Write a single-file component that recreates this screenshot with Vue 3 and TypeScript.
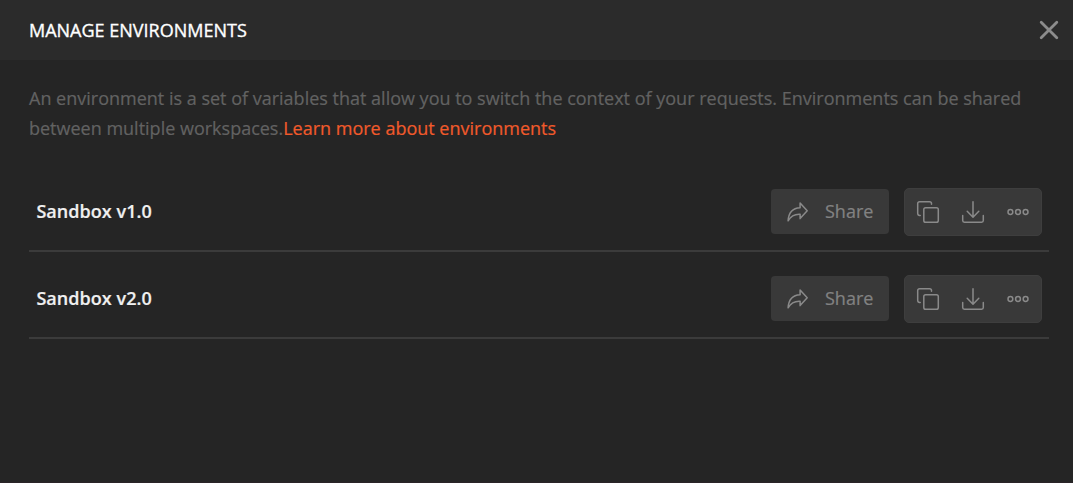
<script setup lang="ts">
interface Environment {
  id: number
  name: string
}

const environments: Environment[] = [
  { id: 1, name: 'Sandbox v1.0' },
  { id: 2, name: 'Sandbox v2.0' },
]
</script>

<template>
  <section class="modal">
    <header class="modal-header">
      <h1 class="title">MANAGE ENVIRONMENTS</h1>
      <button class="close" aria-label="Close">
        <svg width="20" height="20" viewBox="0 0 20 20">
          <path d="M2.2 2.2 17.8 17.8M17.8 2.2 2.2 17.8" />
        </svg>
      </button>
    </header>
    <main class="modal-body">
      <p class="intro">
        An environment is a set of variables that allow you to switch the context of your requests. Environments can be shared<br />between multiple workspaces.<a class="link">Learn more about environments</a>
      </p>
      <ul class="list">
        <li v-for="env in environments" :key="env.id" class="row">
          <span class="name">{{ env.name }}</span>
          <button class="share">
            <svg class="icon" width="24" height="24" viewBox="0 0 24 24">
              <path d="M14.1 3 21.2 10.8 14.1 18.6V14.2C8.5 13.9 4.7 16.2 2.1 20.8 2.6 13.1 6.6 8 14.1 7.7Z" />
            </svg>
            <span class="share-label">Share</span>
          </button>
          <div class="actions">
            <button class="action" aria-label="Duplicate">
              <svg class="icon" width="24" height="24" viewBox="0 0 24 24">
                <path d="M4.2 15.5H3.6Q1.7 15.5 1.7 13.6V3.6Q1.7 1.7 3.6 1.7H13.6Q15.5 1.7 15.5 3.6V4.2" />
                <rect x="7.8" y="7.8" width="14.5" height="14.5" rx="1.8" />
              </svg>
            </button>
            <button class="action" aria-label="Download">
              <svg class="icon" width="24" height="24" viewBox="0 0 24 24">
                <path d="M12 1.8V17M6.2 11.3 12 17.2 17.8 11.3M1.7 15.6V20.6Q1.7 22.3 3.4 22.3H20.6Q22.3 22.3 22.3 20.6V15.6" />
              </svg>
            </button>
            <button class="action" aria-label="More actions">
              <svg class="icon" width="24" height="24" viewBox="0 0 24 24">
                <circle cx="4.4" cy="12" r="2.4" />
                <circle cx="12" cy="12" r="2.4" />
                <circle cx="19.6" cy="12" r="2.4" />
              </svg>
            </button>
          </div>
        </li>
      </ul>
    </main>
  </section>
</template>

<style>
body {
  margin: 0;
  background: #252525;
}
</style>

<style scoped>
.modal {
  box-sizing: border-box;
  height: 483px;
  background: #252525;
  border-bottom: 1px solid #2a2428;
  font-family: 'Open Sans', 'Noto Sans', sans-serif;
  font-size: 18px;
  overflow: hidden;
  -webkit-text-stroke-width: 0.2px;
}
.modal-header {
  box-sizing: border-box;
  height: 60px;
  padding: 0 14px 0 29px;
  display: flex;
  align-items: center;
  justify-content: space-between;
  background: #2b2b2b;
}
.title {
  margin: 0;
  color: #fff;
  font-size: 18px;
  font-weight: 500;
  line-height: 30px;
  white-space: nowrap;
  -webkit-text-stroke-width: 0.35px;
}
button {
  padding: 0;
  border: 0;
  background: none;
  font: inherit;
}
.close {
  width: 20px;
  height: 20px;
}
.close svg {
  display: block;
  fill: none;
  stroke: #8c8c8c;
  stroke-width: 2.8;
  stroke-linecap: round;
}
.modal-body {
  padding: 23px 24px 0 29px;
}
.intro {
  margin: 0;
  color: #626262;
  line-height: 30px;
  white-space: nowrap;
}
.link {
  color: #f15a2b;
}
.list {
  margin: 22px 0 0;
  padding: 0;
  list-style: none;
}
.row {
  box-sizing: border-box;
  height: 87px;
  padding: 23px 7px 14px;
  display: flex;
  align-items: flex-start;
  border-bottom: 2px solid #3b3b3b;
}
.name {
  flex: 1;
  padding-left: 0.4px;
  color: #f0f0f0;
  font-weight: 600;
  letter-spacing: 0.05px;
  line-height: 46px;
}
.share {
  width: 118px;
  height: 45px;
  margin: 1px 15px 0 0;
  padding: 0 15px;
  display: flex;
  align-items: center;
  gap: 15px;
  border-radius: 4px;
  background: #393939;
  color: #828282;
}
.share-label {
  line-height: 24px;
  padding-bottom: 2px;
}
.icon {
  display: block;
  fill: none;
  stroke: #8a8a8a;
  stroke-width: 1.5;
  stroke-linecap: round;
  stroke-linejoin: round;
}
.actions {
  box-sizing: border-box;
  width: 138px;
  height: 48px;
  padding: 0 11px;
  display: flex;
  align-items: center;
  justify-content: space-between;
  border: 1px solid #3e3e3e;
  border-radius: 5px;
  background: #393939;
}
</style>
